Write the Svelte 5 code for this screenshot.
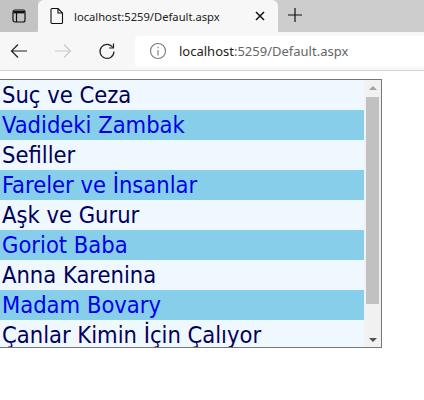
<script>
    const books = [
        'Suç ve Ceza',
        'Vadideki Zambak',
        'Sefiller',
        'Fareler ve İnsanlar',
        'Aşk ve Gurur',
        'Goriot Baba',
        'Anna Karenina',
        'Madam Bovary',
        'Çanlar Kimin İçin Çalıyor'
    ]
</script>

<header>
    <div class="tabstrip">
        <div class="tabswitch">
            <svg width="16" height="16" viewBox="0 0 16 16" fill="none" stroke="#111" stroke-width="1.2">
                <rect x="2" y="2" width="12" height="12" rx="2" />
                <path d="M2.5 4.2h11" stroke-width="2.4" />
                <path d="M5.5 4v10" />
            </svg>
        </div>
        <div class="tab">
            <svg class="page" width="14" height="18" viewBox="0 0 14 18" fill="none" stroke="#111" stroke-width="1.1">
                <path d="M2 1.5h6l4.500 4.500v9.500a1 1 0 0 1-1 1h-9.500a1 1 0 0 1-1-1v-13a1 1 0 0 1 1-1z" />
                <path d="M8 1.500v4.500h4.500" />
            </svg>
            <span class="title">localhost:5259/Default.aspx</span>
            <svg class="close" width="10" height="10" viewBox="0 0 10 10" stroke="#111" stroke-width="1.500">
                <path d="M1 1l8 8M9 1l-8 8" />
            </svg>
        </div>
        <svg class="plus" width="16" height="16" viewBox="0 0 16 16" stroke="#111" stroke-width="1.200">
            <path d="M8 1v14M1 8h14" />
        </svg>
    </div>
    <div class="toolbar">
        <svg class="back" width="18" height="16" viewBox="0 0 18 16" fill="none" stroke="#222" stroke-width="1.200">
            <path d="M17 8H1.500M8 1.500L1.500 8 8 14.500" />
        </svg>
        <svg class="forward" width="18" height="16" viewBox="0 0 18 16" fill="none" stroke="#c9c9c9" stroke-width="1.200">
            <path d="M1 8h15.500M10 1.500L16.500 8 10 14.500" />
        </svg>
        <svg class="reload" width="18" height="18" viewBox="0 0 18 18" fill="none" stroke="#222" stroke-width="1.200">
            <path d="M14.800 5.500A7 7 0 1 0 16 9.500" />
            <path d="M15.500 1.500v4.500h-4.500" />
        </svg>
        <div class="address">
            <svg width="18" height="18" viewBox="0 0 18 18" fill="none" stroke="#777" stroke-width="1.100">
                <circle cx="9" cy="9" r="7.500" />
                <path d="M9 8v5.500M9 4.800v1.400" />
            </svg>
            <span class="url">localhost<span class="rest">:5259/Default.aspx</span></span>
        </div>
    </div>
</header>

<main>
    <div class="listbox">
        <ul>
            {#each books as book, index}
                <li class:alt={index % 2 === 1}>{book}</li>
            {/each}
        </ul>
        <div class="scrollbar">
            <div class="arrow up"></div>
            <div class="thumb"></div>
            <div class="arrow down"></div>
        </div>
    </div>
</main>

<style>
    :global(body) {
        background: #fff;
    }

    header {
        font-family: "Noto Sans", sans-serif;
    }

    .tabstrip {
        height: 32px;
        background: #cdcdcd;
        display: flex;
        align-items: stretch;
    }

    .tabswitch {
        width: 38px;
        display: flex;
        align-items: center;
        justify-content: center;
        background: #c3c3c3;
        border-bottom-right-radius: 4px;
    }

    .tab {
        width: 240px;
        background: #f7f7f7;
        border-radius: 6px 6px 0 0;
        display: flex;
        align-items: center;
        padding: 0 9px 0 12px;
        box-sizing: border-box;
    }

    .title {
        flex: 1;
        margin-left: 10px;
        font-size: 11.2px;
        color: #222;
        white-space: nowrap;
    }

    .close {
        margin-right: 4px;
    }

    .plus {
        margin: 7px 0 0 9px;
    }

    .toolbar {
        height: 38px;
        background: #f7f7f7;
        border-bottom: 1px solid #d2d2d2;
        display: flex;
        align-items: center;
    }

    .back {
        margin-left: 10px;
    }

    .forward {
        margin-left: 26px;
    }

    .reload {
        margin-left: 26px;
    }

    .address {
        margin-left: 19px;
        flex: 1;
        height: 31px;
        background: #fff;
        border-radius: 4px 0 0 4px;
        display: flex;
        align-items: center;
        padding-left: 14px;
    }

    .url {
        margin-left: 12px;
        font-size: 13px;
        color: #222;
        white-space: nowrap;
    }

    .rest {
        color: #666;
    }

    main {
        padding-top: 8px;
    }

    .listbox {
        width: 382px;
        height: 269px;
        box-sizing: border-box;
        border: 1px solid #767676;
        border-left: 0;
        background: #f0f8ff;
        display: flex;
        overflow: hidden;
    }

    ul {
        flex: 1;
        margin: 0;
        padding: 0;
        list-style: none;
        overflow: hidden;
    }

    li {
        height: 30px;
        line-height: 30px;
        padding-left: 2px;
        font-family: "DejaVu Sans Condensed", "DejaVu Sans", sans-serif;
        font-stretch: condensed;
        font-size: 23.5px;
        color: #00005a;
        white-space: nowrap;
    }

    li.alt {
        background: #87ceeb;
        color: #0000e6;
    }

    .scrollbar {
        width: 17px;
        background: #f1f1f1;
        display: flex;
        flex-direction: column;
        align-items: center;
    }

    .arrow {
        width: 0;
        height: 0;
        border-left: 4px solid transparent;
        border-right: 4px solid transparent;
    }

    .up {
        margin: 6px 0 7px;
        border-bottom: 4px solid #a3a3a3;
    }

    .down {
        margin: auto 0 5px;
        border-top: 4px solid #505050;
    }

    .thumb {
        width: 13px;
        height: 207px;
        background: #c1c1c1;
    }
</style>
